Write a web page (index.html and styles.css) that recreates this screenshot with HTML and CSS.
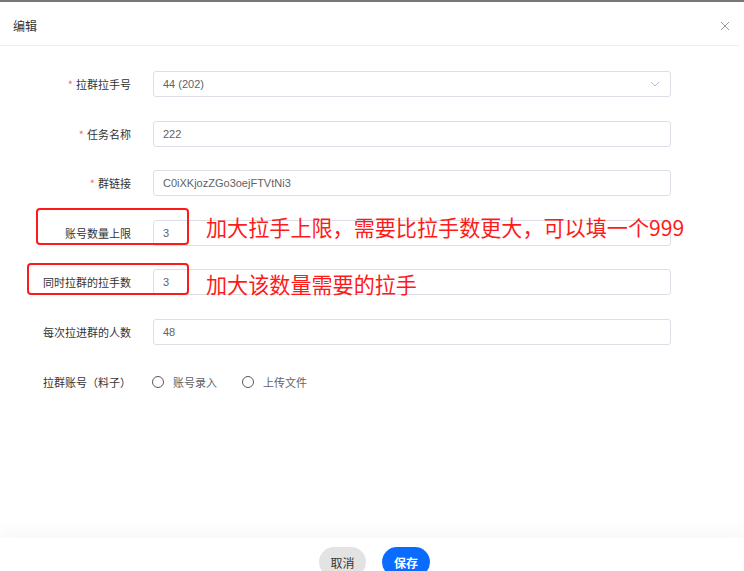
FILE: index.html
```html
<!DOCTYPE html>
<html lang="zh">
<head>
<meta charset="utf-8">
<link rel="stylesheet" href="styles.css">
</head>
<body>
<div class="dialog">
  <div class="topbar"></div>
  <div class="header">
    <span class="title">编辑</span>
    <svg class="close" width="10" height="10" viewBox="0 0 10 10"><path d="M1 1L9 9M9 1L1 9" stroke="#9a9a9a" stroke-width="1" fill="none"/></svg>
  </div>
  <div class="body">
    <div class="form">
      <div class="row">
        <label class="label"><span class="req">*</span>拉群拉手号</label>
        <div class="input select"><span class="val">44 (202)</span>
          <svg class="arrow" width="10" height="6" viewBox="0 0 10 6"><path d="M1 1L5 5L9 1" stroke="#b8bcc4" stroke-width="1" fill="none"/></svg>
        </div>
      </div>
      <div class="row">
        <label class="label"><span class="req">*</span>任务名称</label>
        <div class="input"><span class="val">222</span></div>
      </div>
      <div class="row">
        <label class="label"><span class="req">*</span>群链接</label>
        <div class="input"><span class="val">C0iXKjozZGo3oejFTVtNi3</span></div>
      </div>
      <div class="row">
        <label class="label">账号数量上限</label>
        <div class="input"><span class="val">3</span></div>
      </div>
      <div class="row">
        <label class="label">同时拉群的拉手数</label>
        <div class="input"><span class="val">3</span></div>
      </div>
      <div class="row">
        <label class="label">每次拉进群的人数</label>
        <div class="input"><span class="val">48</span></div>
      </div>
      <div class="row">
        <label class="label">拉群账号（料子）</label>
        <div class="radios">
          <span class="radio"><span class="circle"></span>账号录入</span>
          <span class="radio"><span class="circle"></span>上传文件</span>
        </div>
      </div>
    </div>
    <div class="mark box1"></div>
    <div class="mark box2"></div>
    <div class="note note1">加大拉手上限，需要比拉手数更大，可以填一个999</div>
    <div class="note note2">加大该数量需要的拉手</div>
  </div>
  <div class="footer">
    <button class="btn cancel">取消</button>
    <button class="btn save">保存</button>
  </div>
</div>
</body>
</html>
```

FILE: styles.css
```css
html, body {
  margin: 0;
  padding: 0;
  background: #fff;
}
body {
  width: 744px;
  height: 571px;
  overflow: hidden;
  font-family: "Noto Sans CJK SC", "Liberation Sans", sans-serif;
}
.dialog {
  display: flex;
  flex-direction: column;
  height: 571px;
}
.topbar {
  height: 2px;
  background: #777;
  flex: none;
}
.header {
  height: 44px;
  width: 739px;
  border-bottom: 1px solid #eeeeee;
  display: flex;
  align-items: center;
  justify-content: space-between;
  padding: 4px 9px 0 13px;
  box-sizing: border-box;
  flex: none;
}
.title {
  font-size: 12px;
  color: #333;
}
.body {
  position: relative;
  flex: 1;
  padding-top: 25px;
}
.form {
  display: flex;
  flex-direction: column;
  gap: 23.6px;
}
.row {
  display: flex;
  align-items: center;
  height: 26px;
  gap: 22px;
}
.label {
  width: 131px;
  text-align: right;
  font-size: 11px;
  color: #333;
  flex: none;
}
.req {
  color: #f56c6c;
  margin-right: 3px;
}
.input {
  width: 518px;
  height: 26px;
  box-sizing: border-box;
  border: 1px solid #dcdfe6;
  border-radius: 3px;
  display: flex;
  align-items: center;
  padding-left: 9px;
  font-family: "Liberation Sans", sans-serif;
  font-size: 11px;
  color: #606266;
}
.select {
  justify-content: space-between;
  padding-right: 10px;
}
.radios {
  display: flex;
  font-size: 11px;
  color: #606266;
}
.radio {
  display: flex;
  align-items: center;
  margin-left: -1px;
  width: 91px;
}
.circle {
  width: 12px;
  height: 12px;
  box-sizing: border-box;
  border: 1px solid #5a5a5a;
  border-radius: 50%;
  margin-right: 9px;
}
.mark {
  position: absolute;
  border: 2.5px solid #ff1a1a;
  border-radius: 4px;
  box-sizing: border-box;
}
.box1 {
  left: 36px;
  top: 162px;
  width: 153px;
  height: 37px;
}
.box2 {
  left: 27px;
  top: 217px;
  width: 162px;
  height: 32px;
}
.note {
  position: absolute;
  left: 206px;
  font-size: 21.1px;
  line-height: 1;
  color: #ff1a1a;
  font-family: "Noto Sans CJK SC", sans-serif;
  white-space: nowrap;
}
.note1 {
  top: 171px;
}
.note2 {
  top: 228px;
}
.footer {
  height: 33px;
  flex: none;
  display: flex;
  justify-content: center;
  gap: 16px;
  padding-top: 9px;
  padding-left: 5px;
  box-sizing: border-box;
  box-shadow: 0 -8px 16px rgba(0, 0, 0, 0.03);
  position: relative;
}
.btn {
  border: none;
  height: 30px;
  padding: 0;
  border-radius: 15px;
  font-family: "Noto Sans CJK SC", sans-serif;
  font-size: 12px;
  flex: none;
}
.cancel {
  width: 47px;
  background: #e3e3e3;
  color: #333;
}
.save {
  width: 48px;
  background: #0a6cff;
  color: #fff;
  font-weight: bold;
}
```
